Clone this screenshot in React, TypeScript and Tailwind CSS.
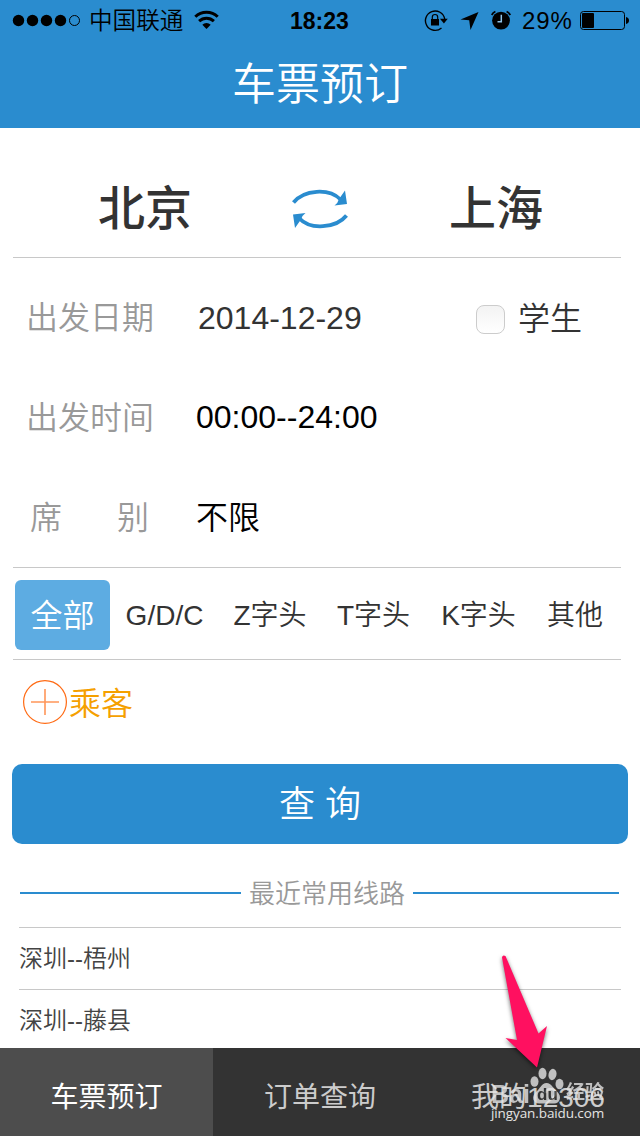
import { useState } from 'react';
import type { ReactNode } from 'react';

const TRAIN_TYPES = [
  { label: '全部', className: 'w-[95px] text-[32px]' },
  { label: 'G/D/C', className: 'w-[109px] text-[28px]' },
  { label: 'Z字头', className: 'w-[102px] text-[28px]' },
  { label: 'T字头', className: 'w-[105px] text-[28px]' },
  { label: 'K字头', className: 'w-[105px] text-[28px]' },
  { label: '其他', className: 'w-[88px] text-[28px]' },
];

const RECENT_ROUTES = ['深圳--梧州', '深圳--藤县'];

const TABS = [
  { label: '车票预订', className: 'w-[213px]' },
  { label: '订单查询', className: 'w-[214px]' },
  { label: '我的12306', className: 'w-[213px] pl-[9px]' },
];

function StatusBar() {
  return (
    <div className="h-10 flex items-center text-black text-2xl leading-10">
      <svg width="70" height="40" viewBox="0 0 70 40" className="ml-3 shrink-0">
        {[6.5, 20.5, 34.5, 48.5].map((cx) => (
          <circle key={cx} cx={cx} cy="20.5" r="5.7" />
        ))}
        <circle cx="62.5" cy="20.5" r="5" fill="none" stroke="currentColor" strokeWidth="1" />
      </svg>
      <span className="ml-[7px] mt-[2px] w-[96px] text-[23.6px] font-[350] whitespace-nowrap">中国联通</span>
      <svg width="28" height="40" viewBox="0 0 28 40" className="ml-[8px] shrink-0" fill="none" stroke="currentColor" strokeWidth="3">
        <path d="M2.3 16.8a16 16 0 0 1 22.4 0" />
        <path d="M6.1 21.1a10.8 10.8 0 0 1 14.8 0" />
        <path d="M13.5 29l-4.2-4.3a6.1 6.1 0 0 1 8.4 0z" fill="currentColor" stroke="none" />
      </svg>
      <span className="ml-[69px] mt-[1px] w-[60px] text-[23px] font-bold">18:23</span>
      <div className="ml-[74px] flex items-center">
        {/* rotation lock */}
        <svg width="26" height="40" viewBox="0 0 26 40" className="shrink-0">
          <path d="M17.5 28A9.7 9.7 0 1 1 20.7 19" fill="none" stroke="currentColor" strokeWidth="1.4" />
          <path d="M16 18.8h7.8L19.9 23.5z" />
          <rect x="7" y="19" width="8" height="6.5" />
          <path d="M8.3 19.5v-2.3a2.7 2.7 0 0 1 5.4 0v2.3" fill="none" stroke="currentColor" strokeWidth="1.2" />
        </svg>
        <svg width="20" height="40" viewBox="0 0 20 40" className="ml-[10px] shrink-0">
          <path d="M.5 19.5L18.5 12l-8 18-1.3-9.7z" />
        </svg>
        <svg width="22" height="40" viewBox="0 0 22 40" className="ml-[10px] shrink-0">
          <circle cx="11" cy="20.6" r="8.9" />
          <path d="M1.7 15a8 8 0 0 1 3.7-3.5M20.3 15a8 8 0 0 0-3.7-3.5" fill="none" stroke="currentColor" strokeWidth="1.7" />
          <path d="M11.3 14.7v7H7.5" fill="none" stroke="#8fc3e8" strokeWidth="1.5" />
        </svg>
        <span className="ml-[10px] mt-[1px] w-[51px] tracking-[0.9px]">29%</span>
        <svg width="50" height="40" viewBox="0 0 50 40" className="ml-[7px] shrink-0">
          <rect x=".5" y="11.5" width="44" height="18" rx="3" fill="none" stroke="currentColor" />
          <rect x="2" y="13" width="12" height="15" rx="1" />
          <path d="M46 17q3 .8 3 3.5T46 24z" />
        </svg>
      </div>
    </div>
  );
}

function SwapIcon() {
  return (
    <svg width="56" height="42" viewBox="0 0 56 42" fill="#2a8ccf">
      <path d="M1.5 14.5C12 1.500 37 0 48.500 11.500" fill="none" stroke="#2a8ccf" strokeWidth="3.800" />
      <path d="M53 2.500L55 16 42.500 17.500Q46 15 47 11z" />
      <path d="M54.5 27.500C44 40.500 18 42 7.500 30.500" fill="none" stroke="#2a8ccf" strokeWidth="3.800" />
      <path d="M3 40L1 26.500l12.500-1.500Q10 27.500 9 31.500z" />
    </svg>
  );
}

function FormRow({ label, children }: { label: ReactNode; children: ReactNode }) {
  return (
    <div className="h-[100px] flex items-center text-[32px]">
      <div className="w-[183px] pl-[13px] font-[350] text-[#999]">{label}</div>
      {children}
    </div>
  );
}

function PointerArrow() {
  return (
    <svg
      width="60"
      height="130"
      viewBox="0 0 60 130"
      className="absolute left-[500px] top-[950px] drop-shadow-[0_2px_2px_rgba(0,0,0,0.55)]"
    >
      <path
        d="M2 7.500Q2.500 4.500 5.500 6L38.500 83.500l8.500-7.500-10 41.500L5.500 88l11.500 2z"
        fill="#ff1060"
      />
    </svg>
  );
}

function Watermark() {
  return (
    <div className="absolute left-[491px] top-[1066px] w-[120px] h-[60px] text-[#e4e4e4]">
      <div className="flex items-end h-[39px] opacity-80">
        <span className="w-[39px] text-[25px] leading-[22px] font-bold">Bai</span>
        <div className="relative w-[36px] h-[39px]">
          <svg width="36" height="39" viewBox="0 0 36 39" fill="currentColor">
            <ellipse cx="4.500" cy="15.500" rx="4" ry="5.300" />
            <ellipse cx="12.500" cy="7.500" rx="4" ry="5.700" />
            <ellipse cx="22.500" cy="8.500" rx="4" ry="5.700" transform="rotate(12 22.500 8.500)" />
            <ellipse cx="29.500" cy="18" rx="4" ry="5.300" />
            <path d="M16.500 17c5 0 7 6 11 9 5 5 2 12-4 11.500H10c-7 .5-9-7-4-11.500 4-3 5.500-9 10.500-9z" />
          </svg>
          <span className="absolute left-[7px] bottom-[2px] text-[17px] leading-[17px] font-bold text-[#333]">du</span>
        </div>
        <span className="text-[19px] leading-[25px] font-bold whitespace-nowrap">经验</span>
      </div>
      <div className="font-['Open_Sans',sans-serif] text-[13.500px] leading-[17px] tracking-[-0.100px] font-medium">jingyan.baidu.com</div>
    </div>
  );
}

export default function App() {
  const [trainType, setTrainType] = useState('全部');
  const [activeTab, setActiveTab] = useState('车票预订');
  const [isStudent, setIsStudent] = useState(false);

  return (
    <div className="relative w-[640px] h-[1136px] overflow-hidden flex flex-col bg-white text-[#333] font-['Liberation_Sans','Noto_Sans_CJK_SC',sans-serif]">
      <header className="h-32 shrink-0 bg-[#2a8ccf]">
        <StatusBar />
        <h1 className="h-[88px] text-center text-[44px] leading-[90px] font-[350] text-white">车票预订</h1>
      </header>

      <main className="flex-1 min-h-0 overflow-hidden">
        {/* Route */}
        <div className="ml-[13px] w-[608px] h-[130px] pt-[30px] flex border-b border-[#c8c8c8] text-[47px] leading-[102px] font-medium">
          <span className="w-[279px] pl-[85px]">北京</span>
          <button className="w-[56px] h-[102px] flex items-center justify-center">
            <SwapIcon />
          </button>
          <span className="pl-[101px]">上海</span>
        </div>

        {/* Search form */}
        <div className="ml-[13px] w-[608px] h-[310px] pt-[10px] border-b border-[#c8c8c8]">
          <FormRow label="出发日期">
            <span className="w-[280px] pl-[2px]">2014-12-29</span>
            <button
              onClick={() => setIsStudent(!isStudent)}
              className="flex items-center gap-[13px]"
            >
              <span className={`w-[29px] h-[29px] mt-[2px] rounded-lg border border-[#ccc] ${isStudent ? 'bg-[#5dace2]' : 'bg-gradient-to-b from-[#f3f3f3] to-white'}`} />
              <span className="mt-[1px] font-[350]">学生</span>
            </button>
          </FormRow>
          <FormRow label="出发时间">
            <span className="-mt-[2px] text-black">00:00--24:00</span>
          </FormRow>
          <FormRow
            label={
              <span className="flex justify-between w-[119px] ml-[4px]">
                <span>席</span>
                <span>别</span>
              </span>
            }
          >
            <span className="text-black font-[350]">不限</span>
          </FormRow>
        </div>

        {/* Train type filter */}
        <div className="ml-[13px] w-[608px] h-[92px] pt-3 pl-0.5 flex border-b border-[#c8c8c8] font-[350]">
          {TRAIN_TYPES.map((type) => (
            <button
              key={type.label}
              onClick={() => setTrainType(type.label)}
              className={`h-[70px] pt-[2px] shrink-0 rounded-md whitespace-nowrap ${type.className} ${
                trainType === type.label ? 'bg-[#5dace2] text-white' : ''
              }`}
            >
              {type.label}
            </button>
          ))}
        </div>

        <button className="mt-5 ml-[23px] h-[44px] flex items-center gap-0.5 text-[32px] leading-[44px] text-[#f5a000]">
          <svg width="44" height="44" viewBox="0 0 44 44" fill="none" stroke="#ff6a13">
            <circle cx="22" cy="22" r="21.400" strokeWidth="1.200" />
            <path d="M8 22h28M22 9v26" strokeWidth="1.600" strokeOpacity="0.700" />
          </svg>
          <span className="mt-[4px] font-[350]">乘客</span>
        </button>

        <button className="mt-10 ml-3 w-[616px] h-20 block rounded-[10px] bg-[#2a8ccf] text-white text-[36px] leading-[82px] font-[350]">
          查 询
        </button>

        {/* Recent routes */}
        <div className="mt-[28px] ml-5 w-[599px] h-[55px] flex items-start">
          <div className="mt-[20px] w-[221px] h-0.5 bg-[#2a8ccf]" />
          <span className="w-[172px] text-center text-[26px] leading-[45px] font-[350] text-[#999]">最近常用线路</span>
          <div className="mt-[20px] w-[206px] h-0.5 bg-[#2a8ccf]" />
        </div>
        {RECENT_ROUTES.map((route) => (
          <div key={route} className="ml-[19px] w-[602px] h-[62px] border-t border-[#c8c8c8] text-2xl leading-[62px] font-[350] text-[#444]">
            {route}
          </div>
        ))}
      </main>

      <nav className="h-[88px] shrink-0 flex bg-[#333]">
        {TABS.map((tab) => (
          <button
            key={tab.label}
            onClick={() => setActiveTab(tab.label)}
            className={`h-[88px] pt-[11px] text-[28px] leading-[77px] ${tab.className} ${
              activeTab === tab.label ? 'bg-[#4d4d4d] text-white' : 'text-[#ccc]'
            }`}
          >
            {tab.label}
          </button>
        ))}
      </nav>

      <Watermark />
      <PointerArrow />
    </div>
  );
}
